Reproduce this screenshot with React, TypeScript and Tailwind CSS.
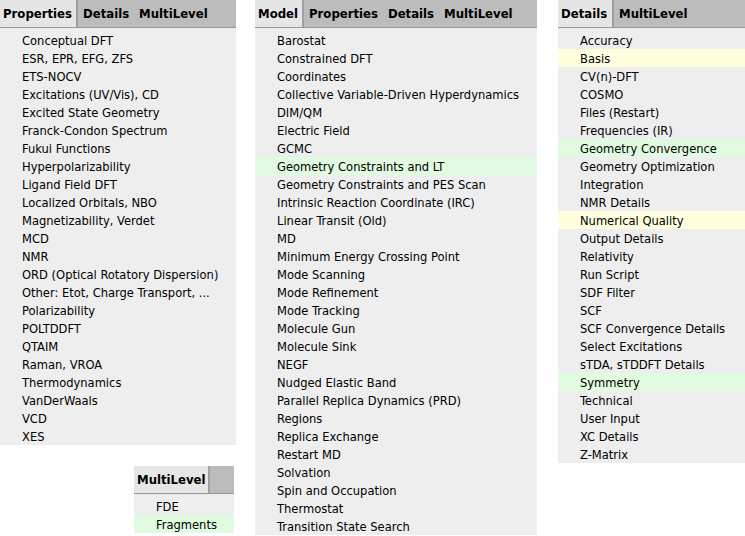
type Tone = 'yellow' | 'green'

type Item = { label: string; tone?: Tone }

function MenuPanel({ tabs, items, tabWidth }: { tabs: string[]; items: Item[]; tabWidth: string }) {
  return (
    <div className="flex flex-col bg-[#eeeeee]">
      <div className="flex h-[28px] shrink-0 items-stretch border-b border-[#999999] bg-[#bcbcbc] text-[13px] font-bold text-black">
        {tabs.map((t, i) => (
          <div
            key={t}
            className={
              i === 0
                ? `flex items-center border-r-2 border-[#a0a0a0] bg-[#e6e6e6] pl-[3px] ${tabWidth}`
                : 'flex items-center px-[5px]'
            }
          >
            {t}
          </div>
        ))}
      </div>
      <ul className="pt-[3px]">
        {items.map((it) => (
          <li
            key={it.label}
            className={`flex h-[18px] items-center whitespace-nowrap pl-[22px] pt-px text-[12.8px] text-black ${
              it.tone === 'yellow' ? 'bg-[#ffffdf]' : it.tone === 'green' ? 'bg-[#e1fbe1]' : ''
            }`}
          >
            {it.label}
          </li>
        ))}
      </ul>
    </div>
  )
}

const props: Item[] = [
  'Conceptual DFT',
  'ESR, EPR, EFG, ZFS',
  'ETS-NOCV',
  'Excitations (UV/Vis), CD',
  'Excited State Geometry',
  'Franck-Condon Spectrum',
  'Fukui Functions',
  'Hyperpolarizability',
  'Ligand Field DFT',
  'Localized Orbitals, NBO',
  'Magnetizability, Verdet',
  'MCD',
  'NMR',
  'ORD (Optical Rotatory Dispersion)',
  'Other: Etot, Charge Transport, ...',
  'Polarizability',
  'POLTDDFT',
  'QTAIM',
  'Raman, VROA',
  'Thermodynamics',
  'VanDerWaals',
  'VCD',
  'XES',
].map((label) => ({ label }))

const model: Item[] = [
  { label: 'Barostat' },
  { label: 'Constrained DFT' },
  { label: 'Coordinates' },
  { label: 'Collective Variable-Driven Hyperdynamics' },
  { label: 'DIM/QM' },
  { label: 'Electric Field' },
  { label: 'GCMC' },
  { label: 'Geometry Constraints and LT', tone: 'green' },
  { label: 'Geometry Constraints and PES Scan' },
  { label: 'Intrinsic Reaction Coordinate (IRC)' },
  { label: 'Linear Transit (Old)' },
  { label: 'MD' },
  { label: 'Minimum Energy Crossing Point' },
  { label: 'Mode Scanning' },
  { label: 'Mode Refinement' },
  { label: 'Mode Tracking' },
  { label: 'Molecule Gun' },
  { label: 'Molecule Sink' },
  { label: 'NEGF' },
  { label: 'Nudged Elastic Band' },
  { label: 'Parallel Replica Dynamics (PRD)' },
  { label: 'Regions' },
  { label: 'Replica Exchange' },
  { label: 'Restart MD' },
  { label: 'Solvation' },
  { label: 'Spin and Occupation' },
  { label: 'Thermostat' },
  { label: 'Transition State Search' },
]

const details: Item[] = [
  { label: 'Accuracy' },
  { label: 'Basis', tone: 'yellow' },
  { label: 'CV(n)-DFT' },
  { label: 'COSMO' },
  { label: 'Files (Restart)' },
  { label: 'Frequencies (IR)' },
  { label: 'Geometry Convergence', tone: 'green' },
  { label: 'Geometry Optimization' },
  { label: 'Integration' },
  { label: 'NMR Details' },
  { label: 'Numerical Quality', tone: 'yellow' },
  { label: 'Output Details' },
  { label: 'Relativity' },
  { label: 'Run Script' },
  { label: 'SDF Filter' },
  { label: 'SCF' },
  { label: 'SCF Convergence Details' },
  { label: 'Select Excitations' },
  { label: 'sTDA, sTDDFT Details' },
  { label: 'Symmetry', tone: 'green' },
  { label: 'Technical' },
  { label: 'User Input' },
  { label: 'XC Details' },
  { label: 'Z-Matrix' },
]

const multi: Item[] = [{ label: 'FDE' }, { label: 'Fragments', tone: 'green' }]

export default function App() {
  return (
    <div
      className="flex h-[536px] w-[745px] items-start bg-white"
      style={{ fontFamily: 'Tahoma, "DejaVu Sans Condensed", "DejaVu Sans", sans-serif' }}
    >
      <div className="flex w-[236px] flex-col">
        <MenuPanel tabs={['Properties', 'Details', 'MultiLevel']} items={props} tabWidth="w-[78px]" />
        <div className="ml-[134px] mt-[21px] w-[100px]">
          <MenuPanel tabs={['MultiLevel']} items={multi} tabWidth="w-[76px]" />
        </div>
      </div>
      <div className="ml-[19px] w-[282px]">
        <MenuPanel tabs={['Model', 'Properties', 'Details', 'MultiLevel']} items={model} tabWidth="w-[49px]" />
      </div>
      <div className="ml-[21px] w-[187px]">
        <MenuPanel tabs={['Details', 'MultiLevel']} items={details} tabWidth="w-[56px]" />
      </div>
    </div>
  )
}
